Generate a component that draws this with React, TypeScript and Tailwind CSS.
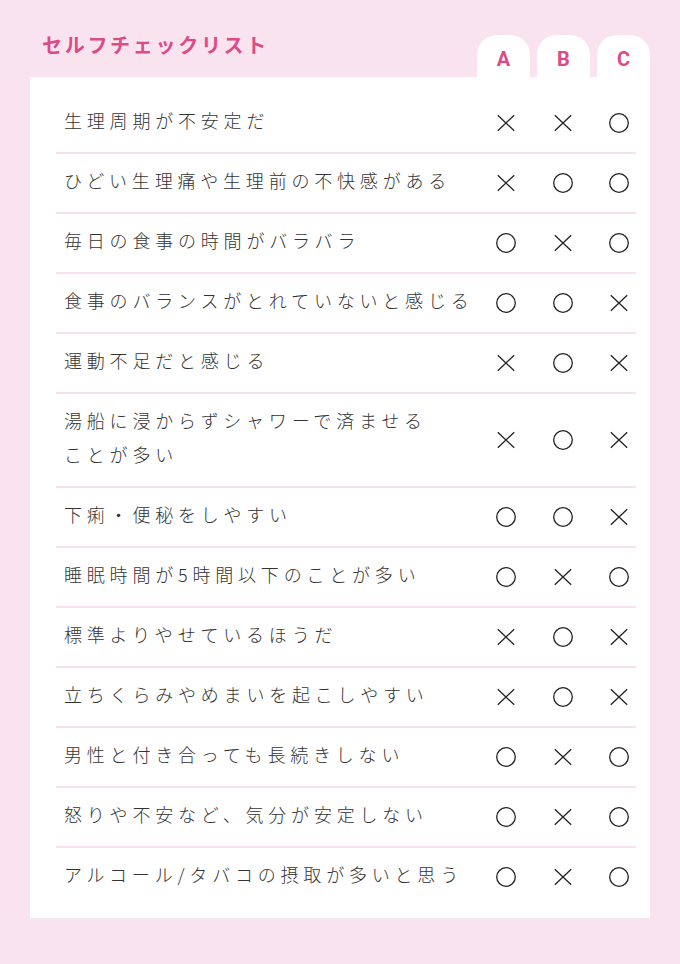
const rows: { text: React.ReactNode; marks: ("o" | "x")[] }[] = [
  { text: "生理周期が不安定だ", marks: ["x", "x", "o"] },
  { text: "ひどい生理痛や生理前の不快感がある", marks: ["x", "o", "o"] },
  { text: "毎日の食事の時間がバラバラ", marks: ["o", "x", "o"] },
  { text: "食事のバランスがとれていないと感じる", marks: ["o", "o", "x"] },
  { text: "運動不足だと感じる", marks: ["x", "o", "x"] },
  {
    text: (
      <>
        湯船に浸からずシャワーで済ませる
        <br />
        ことが多い
      </>
    ),
    marks: ["x", "o", "x"],
  },
  { text: "下痢・便秘をしやすい", marks: ["o", "o", "x"] },
  { text: "睡眠時間が5時間以下のことが多い", marks: ["o", "x", "o"] },
  { text: "標準よりやせているほうだ", marks: ["x", "o", "x"] },
  { text: "立ちくらみやめまいを起こしやすい", marks: ["x", "o", "x"] },
  { text: "男性と付き合っても長続きしない", marks: ["o", "x", "o"] },
  { text: "怒りや不安など、気分が安定しない", marks: ["o", "x", "o"] },
  { text: "アルコール/タバコの摂取が多いと思う", marks: ["o", "x", "o"] },
];

function Mark({ type }: { type: "o" | "x" }) {
  return (
    <svg width="20" height="20" viewBox="0 0 20 20" className="block">
      {type === "o" ? (
        <circle cx="10" cy="10" r="9.3" fill="none" stroke="#222" strokeWidth="1.3" />
      ) : (
        <path d="M1.8 2.2 L18.2 17.8 M18.2 2.2 L1.8 17.8" stroke="#222" strokeWidth="1.3" fill="none" />
      )}
    </svg>
  );
}

export default function App() {
  return (
    <div
      className="min-h-[964px] w-[680px] bg-[#f8e3ef] px-[30px] pt-[35px]"
      style={{ fontFamily: '"Noto Sans CJK JP", "Noto Sans", sans-serif' }}
    >
      <div className="flex h-[42px] items-start justify-between">
        <h1 className="ml-[12px] -mt-[5px] text-[20px] font-bold leading-[30px] tracking-[2.7px] text-[#dc4b87]">
          セルフチェックリスト
        </h1>
        <div className="flex gap-[7px]">
          {["A", "B", "C"].map((l) => (
            <div
              key={l}
              className="flex h-[42px] w-[53px] justify-center rounded-t-[20px] bg-white pt-[14px] text-[20px] font-bold leading-[20px] text-[#dc4b87]"
              style={{ fontFamily: "Roboto, sans-serif" }}
            >
              {l}
            </div>
          ))}
        </div>
      </div>

      <div className="bg-white pb-[12px] pl-[26px] pr-[14px] pt-[17px]">
        {rows.map((r, i) => (
          <div
            key={i}
            className={`flex items-center py-3 ${i < rows.length - 1 ? "border-b-2 border-[#f8e1ee]" : ""}`}
          >
            <p className="-mt-[3px] mb-[3px] flex-1 pl-2 text-[18px] font-light leading-[34px] tracking-[4.8px] text-[#333]">
              {r.text}
            </p>
            <div className="mr-[7px] flex">
              <Mark type={r.marks[0]} />
              <div className="ml-[37px]">
                <Mark type={r.marks[1]} />
              </div>
              <div className="ml-[36px]">
                <Mark type={r.marks[2]} />
              </div>
            </div>
          </div>
        ))}
      </div>
    </div>
  );
}
